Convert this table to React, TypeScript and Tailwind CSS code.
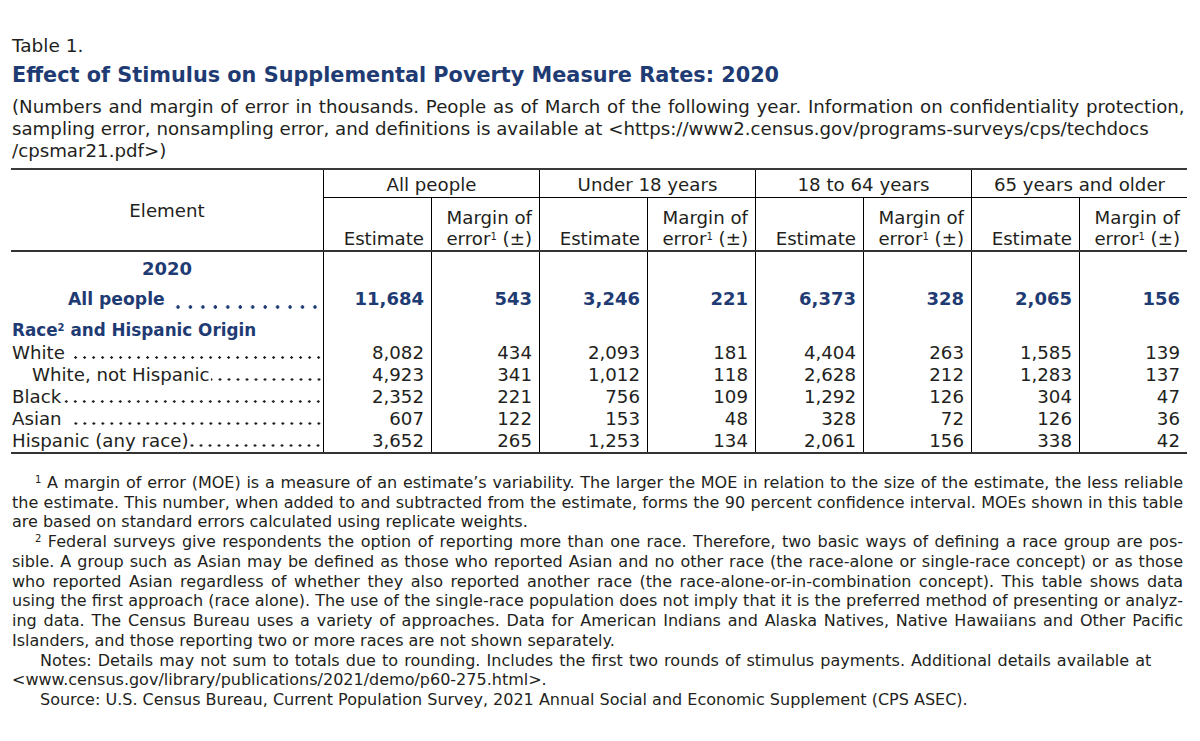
import React from "react";

const FONT = "font-['DejaVu_Sans',sans-serif]";
const BLUE = "text-[#1f3b73]";

const groups = ["All people", "Under 18 years", "18 to 64 years", "65 years and older"];

const rows: { label: string; indent?: boolean; gap?: string; v: string[] }[] = [
  { label: "White", gap: "ml-[4px]", v: ["8,082", "434", "2,093", "181", "4,404", "263", "1,585", "139"] },
  { label: "White, not Hispanic", indent: true, gap: "ml-[1px]", v: ["4,923", "341", "1,012", "118", "2,628", "212", "1,283", "137"] },
  { label: "Black", gap: "ml-[0px]", v: ["2,352", "221", "756", "109", "1,292", "126", "304", "47"] },
  { label: "Asian", gap: "ml-[8px]", v: ["607", "122", "153", "48", "328", "72", "126", "36"] },
  { label: "Hispanic (any race)", gap: "ml-[2px]", v: ["3,652", "265", "1,253", "134", "2,061", "156", "338", "42"] },
];

const allPeople = ["11,684", "543", "3,246", "221", "6,373", "328", "2,065", "156"];

const GRID = "grid grid-cols-[312px_repeat(8,108px)]";

function Leader({ bold, gap }: { bold?: boolean; gap?: string }) {
  return bold ? (
    <div className="flex-1 self-end mb-[5px] ml-[7px] h-[4px] [background-repeat:space_no-repeat] [background-image:radial-gradient(circle,#1f3b73_1.5px,transparent_2px)] [background-size:12px_4px]" />
  ) : (
    <div className={`flex-1 self-end mb-[5px] ${gap ?? "ml-[4px]"} h-[3px] bg-repeat-x bg-right [background-image:radial-gradient(circle,#231f20_1px,transparent_1.5px)] [background-size:9px_3px]`} />
  );
}

function Line({ children, justify, indent, extra }: { children: React.ReactNode; justify?: boolean; indent?: string; extra?: string }) {
  return (
    <div className={`${indent ?? ""} ${extra ?? ""} ${justify ? "text-justify [text-align-last:justify]" : "whitespace-nowrap"}`}>
      {children}
    </div>
  );
}

const Sup = ({ n }: { n: string }) => <sup className="text-[10px]">{n}</sup>;

export default function App() {
  return (
    <div className={`w-[1200px] h-[741px] bg-white text-[#231f20] ${FONT} overflow-hidden`}>
      <div className="pl-[12px] pt-[35px]">
        <div className="text-[18.5px] leading-[22px]">Table 1.</div>
        <div className={`mt-[6px] text-[20.8px] leading-[24px] font-bold ${BLUE}`}>
          Effect of Stimulus on Supplemental Poverty Measure Rates: 2020
        </div>
        <div className="mt-[9px] text-[18.2px] leading-[22px]">
          <Line extra="[word-spacing:1px]">
            (Numbers and margin of error in thousands. People as of March of the following year. Information on confidentiality protection,
          </Line>
          <Line>sampling error, nonsampling error, and definitions is available at &lt;https://www2.census.gov/programs-surveys/cps/techdocs</Line>
          <Line>/cpsmar21.pdf&gt;)</Line>
        </div>
      </div>

      {/* Table */}
      <div className="ml-[11px] mt-[6px] w-[1176px] text-[18.2px]">
        {/* Header */}
        <div className={`${GRID} grid-rows-[28px_52px] border-t-2 border-b-2 border-t-[#3a3a3a] border-b-[#333]`}>
          <div className="row-span-2 flex items-center justify-center leading-[22px] pt-[2px]">Element</div>
          {groups.map((g) => (
            <div
              key={g}
              className="col-span-2 flex items-center justify-center border-l border-b border-black leading-[22px] pt-[2px]"
            >
              {g}
            </div>
          ))}
          {groups.map((g) => (
            <React.Fragment key={g + "s"}>
              <div className="flex items-end justify-end border-l border-black pr-[7px] pb-[1px] leading-[21px]">
                Estimate
              </div>
              <div className="flex flex-col items-end justify-end border-l border-black pr-[7px] pb-[1px] leading-[21px]">
                <span>Margin of</span>
                <span>
                  error<Sup n="1" /> (±)
                </span>
              </div>
            </React.Fragment>
          ))}
        </div>

        {/* Body */}
        <div className="border-b-2 border-[#333]">
          {/* 2020 */}
          <div className={`${GRID} h-[31px]`}>
            <div className={`flex items-center justify-center font-bold ${BLUE} text-[18px] leading-[22px] pt-[2px]`}>
              2020
            </div>
            {allPeople.map((_, i) => (
              <div key={i} className="border-l border-black" />
            ))}
          </div>
          {/* All people */}
          <div className={`${GRID} h-[31px] font-bold ${BLUE} text-[18px]`}>
            <div className="flex items-center pl-[57px] pr-[2px] leading-[22px]">
              <span className="text-[17.2px]">All people</span>
              <Leader bold />
            </div>
            {allPeople.map((v, i) => (
              <div key={i} className="flex items-center justify-end border-l border-black pr-[7px] leading-[22px]">
                {v}
              </div>
            ))}
          </div>
          {/* Race heading */}
          <div className={`${GRID} h-[28px]`}>
            <div className={`flex items-end pl-[1px] font-bold ${BLUE} text-[16.8px] leading-[24px]`}>
              <span>
                Race<Sup n="2" /> and Hispanic Origin
              </span>
            </div>
            {allPeople.map((_, i) => (
              <div key={i} className="border-l border-black" />
            ))}
          </div>
          {rows.map((r) => (
            <div key={r.label} className={`${GRID} h-[22px] leading-[22px]`}>
              <div className={`flex items-center ${r.indent ? "pl-[21px]" : "pl-[1px]"}`}>
                <span className="whitespace-nowrap">{r.label}</span>
                <Leader gap={r.gap} />
              </div>
              {r.v.map((v, i) => (
                <div key={i} className="flex items-center justify-end border-l border-black pr-[7px]">
                  {v}
                </div>
              ))}
            </div>
          ))}
        </div>
      </div>

      {/* Footnotes */}
      <div className="ml-[12px] mt-[19px] w-[1171px] text-[16px] leading-[19.73px]">
        <Line justify indent="pl-[23px]">
          <Sup n="1" /> A margin of error (MOE) is a measure of an estimate’s variability. The larger the MOE in relation to the size of the estimate, the less reliable
        </Line>
        <Line justify>
          the estimate. This number, when added to and subtracted from the estimate, forms the 90 percent confidence interval. MOEs shown in this table
        </Line>
        <Line>are based on standard errors calculated using replicate weights.</Line>
        <Line justify indent="pl-[23px]">
          <Sup n="2" /> Federal surveys give respondents the option of reporting more than one race. Therefore, two basic ways of defining a race group are pos-
        </Line>
        <Line justify>
          sible. A group such as Asian may be defined as those who reported Asian and no other race (the race-alone or single-race concept) or as those
        </Line>
        <Line justify>
          who reported Asian regardless of whether they also reported another race (the race-alone-or-in-combination concept). This table shows data
        </Line>
        <Line justify>
          using the first approach (race alone). The use of the single-race population does not imply that it is the preferred method of presenting or analyz-
        </Line>
        <Line justify>
          ing data. The Census Bureau uses a variety of approaches. Data for American Indians and Alaska Natives, Native Hawaiians and Other Pacific
        </Line>
        <Line>Islanders, and those reporting two or more races are not shown separately.</Line>
        <Line indent="pl-[28px]" extra="[word-spacing:1px]">
          Notes: Details may not sum to totals due to rounding. Includes the first two rounds of stimulus payments. Additional details available at
        </Line>
        <Line>&lt;www.census.gov/library/publications/2021/demo/p60-275.html&gt;.</Line>
        <Line indent="pl-[28px]">
          Source: U.S. Census Bureau, Current Population Survey, 2021 Annual Social and Economic Supplement (CPS ASEC).
        </Line>
      </div>
    </div>
  );
}
